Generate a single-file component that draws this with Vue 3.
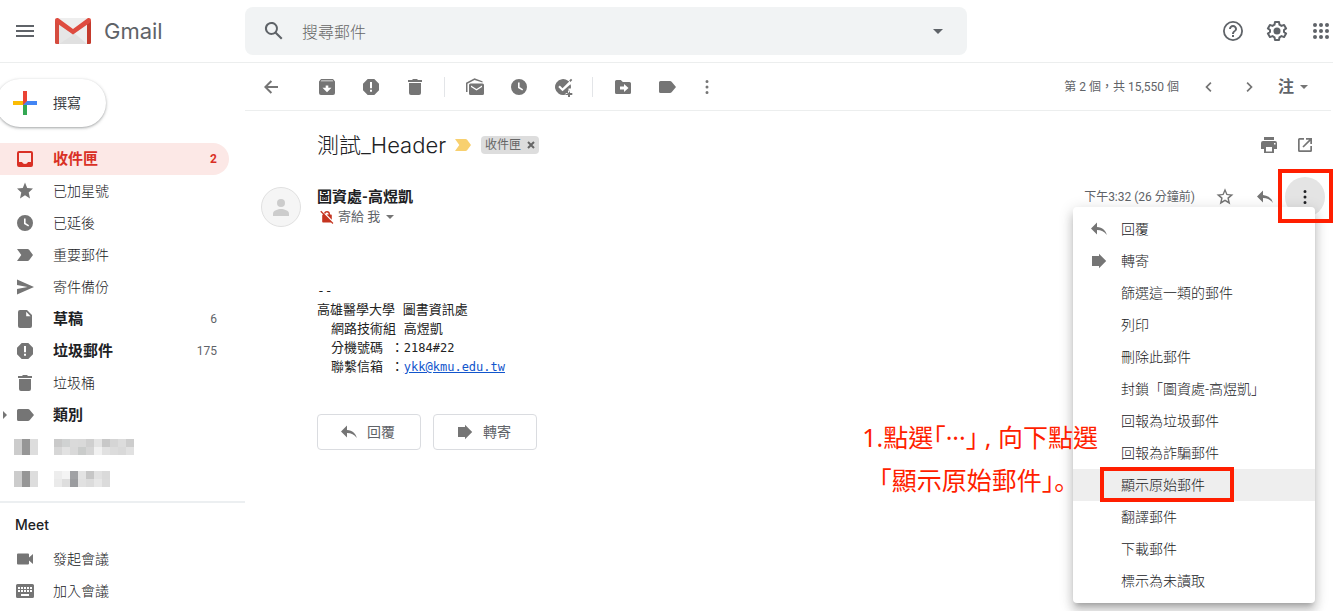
<script setup>
import { h, ref } from 'vue'

const shapes = {
  inbox: 'M16 2H4a2 2 0 0 0-2 2v12a2 2 0 0 0 2 2h12a2 2 0 0 0 2-2V4a2 2 0 0 0-2-2zm0 11h-3a3.200 3.200 0 0 1-6 0H4V4h12z',
  star: 'M10 14.200 15 17.500l-1.300-6L18 7.500l-5.800-.5L10 1.500 7.800 7 2 7.500l4.300 4L5 17.500z',
  starOutline: 'M18.500 7.400l-6.100-.5L10 1.300 7.600 6.900 1.500 7.400l4.600 4L4.700 17.400l5.300-3.200 5.300 3.200-1.400-6zM10 12.400l-3.100 1.900.8-3.500-2.700-2.400 3.600-.3L10 4.700l1.400 3.400 3.600.3-2.700 2.400.8 3.500z',
  clock: 'M10 2a8 8 0 1 0 0 16 8 8 0 0 0 0-16zm3.300 11.500L9 11V5.500h1.600v4.600l3.500 2.100z',
  important: 'M2 4h10.500c.7 0 1.200.3 1.600.8L18 10l-3.900 5.200c-.4.5-.9.8-1.600.8H2l4.300-6z',
  send: 'M2 2.500 19 10 2 17.500v-5.400L12.500 10 2 7.900z',
  file: 'M12 1H5a2 2 0 0 0-2 2v14a2 2 0 0 0 2 2h10a2 2 0 0 0 2-2V6zm-.8 1.800L15.500 7.200h-4.300z',
  spam: 'M6.700 2h6.600L18 6.700v6.600L13.300 18H6.700L2 13.300V6.700zM9 5v6.200h2V5zm0 7.800v2h2v-2z',
  trash: 'M3 3h4l1-1h4l1 1h4v2H3zM4 6h12v10a2 2 0 0 1-2 2H6a2 2 0 0 1-2-2z',
  label: 'M3.500 4h9.500c.7 0 1.200.3 1.600.8L19 10l-4.400 5.200c-.4.5-.9.8-1.600.8H3.500A1.500 1.500 0 0 1 2 14.500v-9A1.500 1.500 0 0 1 3.500 4z',
  back: 'M17 9H6.800l4.300-4.300L9.700 3.300 3 10l6.700 6.700 1.400-1.400L6.800 11H17z',
  archive: 'M4 2h12l2 2.500V16a2 2 0 0 1-2 2H4a2 2 0 0 1-2-2V4.500zM4.300 3.500l-.6.8h12.600l-.6-.8zM8.700 8.500v2.300H5.500L10 15.300l4.500-4.500h-3.200V8.500z',
  mailRead: 'M1 15V5.800L9.500 1.300 17.500 4.200v1.300L9.500 2.900 2.500 6.800V15zM5.500 6.500h12A1.500 1.500 0 0 1 19 8v8.500a1.500 1.500 0 0 1-1.500 1.500h-12A1.500 1.500 0 0 1 4 16.500V8a1.500 1.500 0 0 1 1.500-1.500zM6 8.400v1.700l5.500 3.500 5.500-3.500V8.400L11.500 12z',
  task: 'M15 3.800A8 8 0 1 0 17 14h-1.500v-2.500h2.300c.3-1.500.2-3-.3-4.300L9.500 14.200 5.300 10l1.500-1.500 2.700 2.700 6.700-6.700zM18 1.800l1.300 1.300-1.800 1.800-1.300-1.300zM15 13.800h2V16h2.300v2H17v2h-2v-2h-2.300v-2H15z',
  move: 'M3.500 3h4.300l2 2h6.700A1.500 1.500 0 0 1 18 6.500v9a1.500 1.500 0 0 1-1.500 1.500h-13A1.500 1.500 0 0 1 2 15.500v-11A1.500 1.500 0 0 1 3.500 3zM11 7v2.500H7v3h4V15l4.500-4z',
  more: 'M10 3a1.500 1.500 0 1 0 0 3 1.500 1.500 0 0 0 0-3zm0 5.500a1.500 1.500 0 1 0 0 3 1.500 1.500 0 0 0 0-3zm0 5.500a1.500 1.500 0 1 0 0 3 1.500 1.500 0 0 0 0-3z',
  prev: 'M12.500 6.200 11.300 5l-5 5 5 5 1.200-1.200L8.700 10z',
  next: 'M7.500 6.200 8.700 5l5 5-5 5-1.200-1.200 3.800-3.800z',
  caret: 'M6 8h8l-4 4z',
  print: 'M5 2h10v3H5zM4 6h12a2 2 0 0 1 2 2v6h-3v4H5v-4H2V8a2 2 0 0 1 2-2zm3 6v4.500h6V12zm8-4v1.500h1.500V8z',
  open: 'M4.500 3H9v1.700H4.700v10.600h10.600V11H17v4.500a1.500 1.500 0 0 1-1.500 1.500h-11A1.500 1.500 0 0 1 3 15.500v-11A1.500 1.500 0 0 1 4.500 3zM11 3h6v6h-1.700V5.900l-6.700 6.700-1.200-1.200 6.700-6.700H11z',
  reply: 'M8 8V3.500L2 9.500l6 6V11c4.300 0 7.400 1.500 9.800 5C17 11.500 13.500 8.600 8 8z',
  forward: 'M3 5h7V2.800L17.200 10 10 17.200V15H3z',
  video: 'M3 4.500h10a1 1 0 0 1 1 1v3l4-3.500v10l-4-3.500v3a1 1 0 0 1-1 1H3a1 1 0 0 1-1-1v-9a1 1 0 0 1 1-1z',
  keyboard: 'M2.500 3h15A1.500 1.500 0 0 1 19 4.500v11a1.500 1.500 0 0 1-1.500 1.500h-15A1.500 1.500 0 0 1 1 15.500v-11A1.500 1.500 0 0 1 2.500 3zM3 6v2h2V6zm3 0v2h2V6zm3 0v2h2V6zm3 0v2h2V6zm3 0v2h2V6zM3 9v2h2V9zm3 0v2h2V9zm3 0v2h2V9zm3 0v2h2V9zm3 0v2h2V9zM6 13v2h8v-2z',
  noLock: 'M6.200 5.200C6.800 3.500 8.200 2.500 10 2.500c2.300 0 3.800 1.500 3.800 4V7H15a1 1 0 0 1 1 1v5.500L9.500 7H12v-.5c0-1.300-.8-2.200-2-2.200-1 0-1.700.6-2 1.500zM2.800 2.200 18 17.400l-1.200 1.200L15.200 17H5a1 1 0 0 1-1-1V8c0-.6.4-1 1-1h.2L1.600 3.400z',
}

const Icon = (props) =>
  h('svg', { viewBox: '0 0 20 20', 'aria-hidden': 'true' }, [
    h('path', { d: shapes[props.name], 'fill-rule': 'evenodd' }),
  ])
Icon.props = ['name']

const folders = [
  { icon: 'inbox', text: '收件匣', count: '2', bold: true, active: true },
  { icon: 'star', text: '已加星號' },
  { icon: 'clock', text: '已延後' },
  { icon: 'important', text: '重要郵件' },
  { icon: 'send', text: '寄件備份' },
  { icon: 'file', text: '草稿', count: '6', bold: true },
  { icon: 'spam', text: '垃圾郵件', count: '175', bold: true },
  { icon: 'trash', text: '垃圾桶' },
  { icon: 'label', text: '類別', bold: true, expands: true },
]

const masked = [
  [
    ['#c9c9c9', '#d0d2d2', '#dadada', '#d9d9d9', '#cfcfcf', '#e4e4e4', '#c8c8c8', '#d5d5d5', '#dcdcdc', '#cdcdcd'],
    ['#d6d6d6', '#e2e2e2', '#d9d9d9', '#cacccb', '#d5d5d5', '#f1f1f1', '#e1e1e1', '#dcdcdc', '#d9d9d9', '#e1e1e1'],
  ],
  [
    ['#ededed', '#f4f4f4', '#a0a1a4', '#e3e3e3', '#c6c6c6', '#e1e1e1', '#dadada'],
    ['#eaeaea', '#dedede', '#9b9c9f', '#e1e1e1', '#dcdcdc', '#e7e7e7', '#dbdbdb'],
  ],
]

const toolGroups = [
  [['archive', '封存'], ['spam', '回報為垃圾郵件'], ['trash', '刪除']],
  [['mailRead', '標示為未讀取'], ['clock', '延後'], ['task', '新增至工作']],
  [['move', '移至'], ['label', '標籤'], ['more', '更多']],
]

const menu = [
  { text: '回覆', icon: 'reply' },
  { text: '轉寄', icon: 'forward' },
  { text: '篩選這一類的郵件' },
  { text: '列印' },
  { text: '刪除此郵件' },
  { text: '封鎖「圖資處-高煜凱」' },
  { text: '回報為垃圾郵件' },
  { text: '回報為詐騙郵件' },
  { text: '顯示原始郵件', marked: true },
  { text: '翻譯郵件' },
  { text: '下載郵件' },
  { text: '標示為未讀取' },
]

const query = ref('')
</script>

<template>
  <div class="app">
    <header class="top">
      <div class="brand">
        <button class="burger" aria-label="主選單"><i></i><i></i><i></i></button>
        <svg class="logo" viewBox="0 0 36 26" aria-hidden="true">
          <path d="M2 0h32v26H2z" fill="#eee" />
          <path d="M4 26 18 14l14 12z" fill="#e0e0e0" />
          <path d="M4 26 18 17l-3-2L4 5z" fill="#e6e6e6" />
          <path d="M18 11.500 4 2v4l14 10.500L32 6V2z" fill="#d8d8d8" />
          <path d="M0 2.500 4 5v21H1.500A1.500 1.500 0 0 1 0 24.500z" fill="#d54c3f" />
          <path d="M36 2.500 32 5v21h2.500a1.500 1.500 0 0 0 1.500-1.500z" fill="#c43a2c" />
          <path d="M0 2.500C0 .3 2 -.5 3.700.6L18 11 32.300.6C34-.5 36 .3 36 2.500c0 1-.4 1.700-1.200 2.300L18 16.500 1.200 4.800C.4 4.200 0 3.500 0 2.500z" fill="#de4b3f" />
        </svg>
        <span class="name">Gmail</span>
      </div>
      <form class="search" role="search" @submit.prevent>
        <button class="glass" aria-label="搜尋">
          <svg viewBox="0 0 24 24"><path d="M20.500 19 14.700 13.200a6.500 6.500 0 1 0-1.500 1.500L19 20.500zM5 9.500a4.500 4.500 0 1 1 9 0 4.500 4.500 0 0 1-9 0z" fill-rule="evenodd" /></svg>
        </button>
        <input v-model="query" type="text" placeholder="搜尋郵件" aria-label="搜尋郵件" />
        <button class="opts" aria-label="搜尋選項"><svg viewBox="0 0 24 24"><path d="M7 10h10l-5 5z" /></svg></button>
      </form>
      <div class="apps">
        <button aria-label="支援">
          <svg viewBox="0 0 24 24"><path d="M11 18h2v-2h-2zM12 2a10 10 0 1 0 0 20 10 10 0 0 0 0-20zm0 18.200a8.200 8.200 0 1 1 0-16.400 8.200 8.200 0 0 1 0 16.400zM12 6c-2.200 0-4 1.800-4 4h2c0-1.100.9-2 2-2s2 .9 2 2c0 2-3 1.750-3 5h2c0-2.250 3-2.500 3-5 0-2.200-1.800-4-4-4z" fill-rule="evenodd" /></svg>
        </button>
        <button aria-label="設定">
          <svg viewBox="0 0 24 24">
            <path d="M10 3h4l.5 2.700 2 1.200 2.600-1 2 3.500L19 11v2l2.100 1.600-2 3.500-2.600-1-2 1.200L14 21h-4l-.5-2.700-2-1.200-2.600 1-2-3.500L5 13v-2L2.900 9.400l2-3.500 2.600 1 2-1.200z" fill="none" stroke="#5f6368" stroke-width="2" stroke-linejoin="round" />
            <circle cx="12" cy="12" r="3.500" />
          </svg>
        </button>
        <button aria-label="Google 應用程式">
          <svg viewBox="0 0 24 24">
            <template v-for="y in 3" :key="y"><circle v-for="x in 3" :key="x" :cx="x * 6" :cy="y * 6" r="2" /></template>
          </svg>
        </button>
      </div>
    </header>

    <nav class="side">
      <button class="compose">
        <svg viewBox="0 0 24 24" aria-hidden="true">
          <path d="M10 0h4v10l-4 4z" fill="#ea4335" /><path d="M0 10h10v4H0z" fill="#fbbc04" />
          <path d="M10 14l4-4v14h-4z" fill="#34a853" /><path d="M14 10h10v4H10z" fill="#4285f4" />
          <path d="M10 10h4l-4 4z" fill="#ea4335" />
        </svg>
        撰寫
      </button>
      <a v-for="f in folders" :key="f.text" href="#" class="row" :class="{ bold: f.bold, active: f.active }">
        <span class="lead"><svg v-if="f.expands" viewBox="0 0 5 8"><path d="M0 0l4 4-4 4z" /></svg></span>
        <Icon :name="f.icon" class="ic" />
        <span class="txt">{{ f.text }}</span>
        <span class="count">{{ f.count }}</span>
      </a>
      <div v-for="(rows, i) in masked" :key="i" class="row masked">
        <svg class="m-icon" viewBox="0 0 24 16"><path d="M0 0h8v16H0z" fill="#ccc" /><path d="M8 0h8v16H8z" fill="#969696" /><path d="M16 0h8v16h-8z" fill="#ddd" /></svg>
        <svg class="m-text" viewBox="0 0 80 16">
          <template v-for="(cells, y) in rows" :key="y">
            <rect v-for="(c, x) in cells" :key="x" :x="x * 8" :y="y * 8" width="8" height="8" :fill="c" />
          </template>
        </svg>
      </div>
      <h2 class="meet">Meet</h2>
      <a href="#" class="row"><span class="lead"></span><Icon name="video" class="ic" /><span class="txt">發起會議</span></a>
      <a href="#" class="row"><span class="lead"></span><Icon name="keyboard" class="ic" /><span class="txt">加入會議</span></a>
    </nav>

    <main class="main">
      <div class="toolbar">
        <button class="tool back" aria-label="返回"><Icon name="back" class="ic" /></button>
        <div v-for="(g, i) in toolGroups" :key="i" class="group">
          <button v-for="[icon, label] in g" :key="icon" class="tool" :class="{ slim: icon === 'more' }" :aria-label="label"><Icon :name="icon" class="ic" /></button>
        </div>
        <span class="pos">第 2 個，共 15,550 個</span>
        <button class="pager" aria-label="較新"><Icon name="prev" class="ic" /></button>
        <button class="pager" aria-label="較舊"><Icon name="next" class="ic" /></button>
        <button class="lang">注<Icon name="caret" class="ic" /></button>
      </div>

      <div class="subject">
        <h1>測試_Header</h1>
        <Icon name="important" class="ic mark" />
        <span class="chip">收件匣<button aria-label="移除標籤"><svg viewBox="0 0 8 8"><path d="M1 1l6 6M7 1l-6 6" /></svg></button></span>
        <div class="acts">
          <button aria-label="全部列印"><Icon name="print" class="ic" /></button>
          <button aria-label="在新視窗中開啟"><Icon name="open" class="ic" /></button>
        </div>
      </div>

      <section class="sender">
        <svg class="avatar" viewBox="0 0 40 40" aria-hidden="true">
          <circle cx="20" cy="20" r="19.500" fill="#f5f5f5" stroke="#e0e0e0" />
          <circle cx="20" cy="16" r="4" fill="#ccc" />
          <path d="M12 29v-2.500c0-3 5-4.500 8-4.500s8 1.500 8 4.500V29z" fill="#ccc" />
        </svg>
        <div class="who">
          <strong>圖資處-高煜凱</strong>
          <span class="to"><Icon name="noLock" class="lock" />寄給 我<Icon name="caret" class="ic" /></span>
        </div>
        <span class="time">下午3:32 (26 分鐘前)</span>
        <button class="act" aria-label="加星號"><Icon name="starOutline" class="ic" /></button>
        <button class="act" aria-label="回覆"><Icon name="reply" class="ic" /></button>
        <div class="more">
          <button class="act round" aria-label="更多"><Icon name="more" class="ic" /></button>
          <div class="menu" role="menu">
            <button v-for="m in menu" :key="m.text" role="menuitem" :class="{ marked: m.marked }">
              <span class="slot"><Icon v-if="m.icon" :name="m.icon" class="ic" /></span>{{ m.text }}
            </button>
          </div>
          <span class="frame"></span>
          <p class="note">1.點選<b>「</b>···<b>」</b> , 向下點選<br /><span><b>「</b>顯示原始郵件<b>」。</b></span></p>
        </div>
      </section>

      <div class="body">
        <p>--</p>
        <p>高雄醫學大學 圖書資訊處</p>
        <p class="in">網路技術組 高煜凱</p>
        <p class="in">分機號碼 ：<span>2184#22</span></p>
        <p class="in">聯繫信箱 ：<a href="mailto:ykk@kmu.edu.tw">ykk@kmu.edu.tw</a></p>
      </div>
      <div class="replies">
        <button><Icon name="reply" class="ic" />回覆</button>
        <button><Icon name="forward" class="ic" />轉寄</button>
      </div>
    </main>
  </div>
</template>

<style>
body { background: #fff; overflow: hidden; }
</style>

<style scoped>
.app {
  display: grid;
  grid-template-columns: 245px minmax(0, 1fr);
  grid-template-rows: 63px 1fr;
  min-height: 100vh;
  color: #202124;
  font: 14px/20px Roboto, "Noto Sans CJK TC", sans-serif;
}
.app *, .app *::before, .app *::after { box-sizing: border-box; }
button { border: 0; padding: 0; background: none; color: inherit; font: inherit; display: flex; align-items: center; justify-content: center; cursor: pointer; }
a { text-decoration: none; color: inherit; }
h1, h2, p { margin: 0; font-weight: 400; }
svg { display: block; flex: none; }
.ic { width: 20px; height: 20px; fill: #757575; }

.top { grid-column: 1 / 3; display: flex; align-items: center; border-bottom: 1px solid #eceeee; }
.brand { width: 245px; flex: none; display: flex; align-items: center; padding-left: 16px; }
.burger { width: 18px; flex-direction: column; gap: 3px; margin-right: 21px; }
.burger i { width: 18px; height: 2px; background: #5f6368; }
.logo { width: 36px; height: 26px; }
.name { margin-left: 13px; font: 22px/28px Inter, sans-serif; color: #5f6368; }
.search { flex: 0 1 722px; height: 48px; display: flex; align-items: center; background: #f1f3f4; border-radius: 8px; padding: 0 17px; }
.search svg { width: 24px; height: 24px; fill: #5f6368; }
.search input { flex: 1; min-width: 0; margin: 0 16px; padding: 3px 0 0; border: 0; outline: 0; background: none; font: 300 16px/24px Roboto, "Noto Sans CJK TC", sans-serif; color: #202124; }
.search input::placeholder { color: #666; opacity: 1; }
.apps { margin-left: auto; display: flex; gap: 20px; }
.apps svg { width: 24px; height: 24px; fill: #5f6368; }

.side { padding-top: 16px; }
.compose { height: 48px; width: 110px; margin: 0 0 16px -4px; padding-left: 17px; gap: 16px; justify-content: flex-start; border-radius: 24px; background: #fff; color: #3c4043; box-shadow: 0 1px 2px rgba(60, 64, 67, .3), 0 1px 3px 1px rgba(60, 64, 67, .15); }
.compose svg { width: 24px; height: 24px; }
.row { display: flex; align-items: center; height: 32px; margin-right: 16px; padding-right: 12px; border-radius: 0 16px 16px 0; }
.lead { width: 15px; flex: none; padding-left: 3px; }
.lead svg { width: 5px; height: 8px; fill: #757575; }
.txt { flex: 1; margin-left: 18px; font-weight: 300; }
.count { font-size: 12px; color: #5f6368; }
.bold .txt { font-size: 15px; font-weight: 700; }
.active { background: #fce8e6; color: #d93025; }
.active .ic { fill: #d93025; }
.active .count { color: #d93025; font-weight: 700; }
.masked { padding-left: 14px; gap: 16px; }
.m-icon { width: 24px; height: 16px; }
.m-text { width: 80px; height: 16px; }
.meet { margin-top: 6px; padding: 12px 15px 8px; border-top: 2px solid #eceff1; font: 500 14px/20px Inter, sans-serif; }

.toolbar { display: flex; align-items: center; height: 48px; margin-right: 2px; padding: 0 17px 0 4px; border-bottom: 1px solid #eceeee; }
.tool { width: 44px; height: 32px; }
.slim { width: 36px; }
.back { margin-right: 12px; }
.group { display: flex; align-items: center; }
.group + .group::before { content: ""; width: 1px; height: 20px; margin: 0 8px 0 7px; background: #e3e5e8; }
.pos { margin-left: auto; margin-right: 10px; font-size: 12px; color: #5f6368; white-space: nowrap; }
.pager { width: 40px; height: 32px; }
.lang { margin-left: 9px; font-size: 16px; font-weight: 700; color: #5f6368; }

.subject { display: flex; align-items: center; height: 68px; padding: 0 10px 0 72px; }
.subject h1 { font: 300 22px/28px Roboto, "Noto Sans CJK TC", sans-serif; font-family: Inter, "Noto Sans CJK TC", sans-serif; }
.mark { margin-left: 7px; fill: #f8d06f; }
.chip { display: flex; align-items: center; gap: 6px; margin-left: 8px; height: 18px; padding: 0 4px; border-radius: 4px; background: #ddd; color: #666; font-size: 12px; line-height: 18px; }
.chip svg { width: 8px; height: 8px; stroke: #666; stroke-width: 2; }
.acts { display: flex; margin-left: auto; }
.acts button { width: 36px; height: 32px; }

.sender { display: flex; align-items: flex-start; padding: 0 8px 0 16px; margin-top: -2px; }
.avatar { width: 40px; height: 40px; margin-top: 10px; }
.who { margin: 10px auto 0 16px; }
.who strong { display: block; font-size: 15px; line-height: 20px; }
.to { display: flex; align-items: center; font-size: 13px; color: #5f6368; }
.lock { width: 16px; height: 16px; margin: 0 3px 0 2px; fill: #c5341f; }
.time { margin-top: 10px; margin-right: 10px; font-size: 12px; color: #5f6368; white-space: nowrap; }
.act { width: 40px; height: 40px; }
.more { position: relative; }
.round { border-radius: 50%; background: #e4e4e4; }
.round .ic { fill: #202124; }
.menu { position: absolute; z-index: 1; top: 30px; right: 10px; width: 242px; padding: 6px 0; border-radius: 4px; background: #fff; box-shadow: 0 8px 10px 1px rgba(0, 0, 0, .14), 0 3px 14px 2px rgba(0, 0, 0, .12), 0 5px 5px -3px rgba(0, 0, 0, .2); }
.menu button { position: relative; width: 100%; height: 32px; padding-left: 16px; justify-content: flex-start; font-weight: 300; }
.slot { width: 20px; margin-right: 12px; }
.menu .marked { background: #eee; }
.marked::after { content: ""; position: absolute; left: 27px; top: -2px; width: 134px; height: 35px; border: 4px solid #ff1e00; }
.frame { position: absolute; z-index: 2; top: -8px; right: -8px; width: 55px; height: 54px; border: 4px solid #ff1e00; pointer-events: none; }
.note { position: absolute; z-index: 2; top: 238px; right: 227px; font: 25px/42px "Noto Sans", "Noto Sans CJK TC", sans-serif; color: #ff1e00; white-space: nowrap; pointer-events: none; }
.note span { padding-left: 17px; }
.note b { font-family: "Noto Sans CJK JP", sans-serif; font-weight: 400; font-feature-settings: "halt"; }

.body { margin-top: 54px; padding-left: 72px; font: 13px/19px "DejaVu Sans Mono", "Noto Sans CJK TC", monospace; color: #222; }
.body p { height: 19px; }
.body .in { padding-left: 14px; }
.body span, .body a { font-size: 12px; }
.body a { color: #1155cc; text-decoration: underline; }
.replies { display: flex; gap: 12px; margin-top: 38px; padding-left: 72px; }
.replies button { width: 104px; height: 36px; gap: 8px; padding-left: 21px; justify-content: flex-start; border: 1px solid #dadce0; border-radius: 4px; color: #5f6368; }
</style>
